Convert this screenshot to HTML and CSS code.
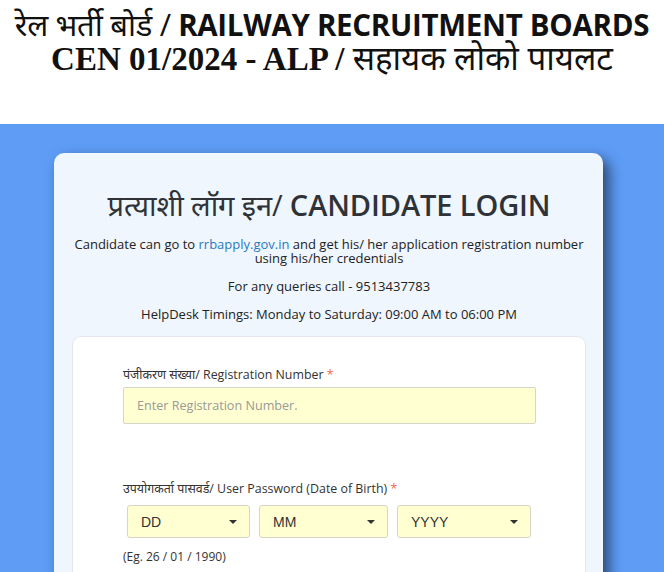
FILE: index.html
```html
<!DOCTYPE html>
<html>
<head>
<meta charset="utf-8">
<link rel="stylesheet" href="styles.css">
</head>
<body>
<header class="banner">
  <div class="banner-line1"><span class="hi">रेल भर्ती बोर्ड /</span> RAILWAY RECRUITMENT BOARDS</div>
  <div class="banner-line2">CEN 01/2024 - ALP / <span class="hi2">सहायक लोको पायलट</span></div>
</header>
<main class="bg">
  <section class="card">
    <h1 class="title"><span class="title-hi">प्रत्याशी लॉग इन/</span> CANDIDATE LOGIN</h1>
    <p class="info">Candidate can go to <a class="link" href="#">rrbapply.gov.in</a> and get his/ her application registration number<br>using his/her credentials</p>
    <p class="info">For any queries call - 9513437783</p>
    <p class="info">HelpDesk Timings: Monday to Saturday: 09:00 AM to 06:00 PM</p>
    <div class="panel">
      <label class="label">पंजीकरण संख्या/ Registration Number <span class="req">*</span></label>
      <input class="input" type="text" placeholder="Enter Registration Number.">
      <label class="label label-pw">उपयोगकर्ता पासवर्ड/ User Password (Date of Birth) <span class="req">*</span></label>
      <div class="dob">
        <div class="sel sel-dd"><span>DD</span><span class="caret"></span></div>
        <div class="sel sel-mm"><span>MM</span><span class="caret"></span></div>
        <div class="sel sel-yy"><span>YYYY</span><span class="caret"></span></div>
      </div>
      <div class="eg">(Eg. 26 / 01 / 1990)</div>
    </div>
  </section>
</main>
</body>
</html>
```
FILE: styles.css
```css
html, body {
  margin: 0;
  padding: 0;
  background: #ffffff;
  overflow: hidden;
}
body {
  font-family: "Open Sans", "Noto Sans", sans-serif;
  color: #333;
}
.banner {
  height: 124px;
  background: #fff;
  text-align: center;
  color: #111;
}
.banner-line1 {
  font-family: "Open Sans", "Noto Sans", sans-serif;
  font-weight: 700;
  font-size: 29.5px;
  line-height: 30px;
  padding-top: 9px;
  letter-spacing: -0.3px;
}
.banner-line1 .hi {
  font-weight: 400;
  font-size: 31px;
}
.banner-line2 {
  font-family: "Liberation Serif", serif;
  font-weight: 700;
  font-size: 33px;
  line-height: 36px;
}
.banner-line2 .hi2 {
  font-family: "Noto Sans", sans-serif;
  font-weight: 400;
  font-size: 33px;
}
.bg {
  background: #5e9cf6;
  height: 448px;
  padding-top: 29px;
  box-sizing: border-box;
}
.card {
  margin-left: 54px;
  width: 549px;
  background: #eff6fe;
  border-radius: 10px;
  box-shadow: 6px 6px 14px rgba(0, 0, 0, 0.55);
  padding: 32px 17px 40px 18px;
  box-sizing: border-box;
  text-align: center;
}
.title {
  margin: 0;
  font-weight: 600;
  font-size: 29px;
  line-height: 40px;
  color: #2f3337;
  letter-spacing: -0.1px;
}
.title-hi {
  font-weight: 400;
}
.info {
  margin: 12px 0 0;
  font-size: 13px;
  line-height: 14px;
  color: #222;
}
.info + .info {
  margin-top: 14px;
}
.link {
  color: #2a7ac0;
  text-decoration: none;
}
.panel {
  margin-top: 15px;
  background: #fff;
  border: 1px solid #e4e8ee;
  border-radius: 9px;
  padding: 30px 50px 40px 50px;
  text-align: left;
}
.label {
  display: block;
  font-size: 12.4px;
  line-height: 16px;
  color: #333;
}
.req {
  color: #f06a4f;
}
.input {
  display: block;
  box-sizing: border-box;
  width: 413px;
  height: 37px;
  margin-top: 4px;
  background: #ffffd2;
  border: 1px solid #d6d6c8;
  border-radius: 2px;
  padding: 0 13px;
  font-family: "Open Sans", sans-serif;
  font-size: 12.6px;
  color: #333;
  outline: none;
}
.input::placeholder {
  color: #999;
}
.label-pw {
  margin-top: 57px;
}
.dob {
  display: flex;
  gap: 9px;
  margin-top: 8px;
  margin-left: 4px;
}
.sel {
  box-sizing: border-box;
  height: 33px;
  background: #ffffd2;
  border: 1px solid #d6d6c8;
  border-radius: 3px;
  display: flex;
  align-items: center;
  justify-content: space-between;
  padding: 0 12px 0 13px;
  font-family: "Liberation Sans", Arial, sans-serif;
  font-size: 14px;
  color: #333;
}
.sel-dd { width: 123px; }
.sel-mm { width: 129px; }
.sel-yy { width: 134px; }
.caret {
  width: 0;
  height: 0;
  border-left: 4px solid transparent;
  border-right: 4px solid transparent;
  border-top: 4px solid #333;
}
.eg {
  margin-top: 10px;
  font-size: 12px;
  color: #333;
}
```
